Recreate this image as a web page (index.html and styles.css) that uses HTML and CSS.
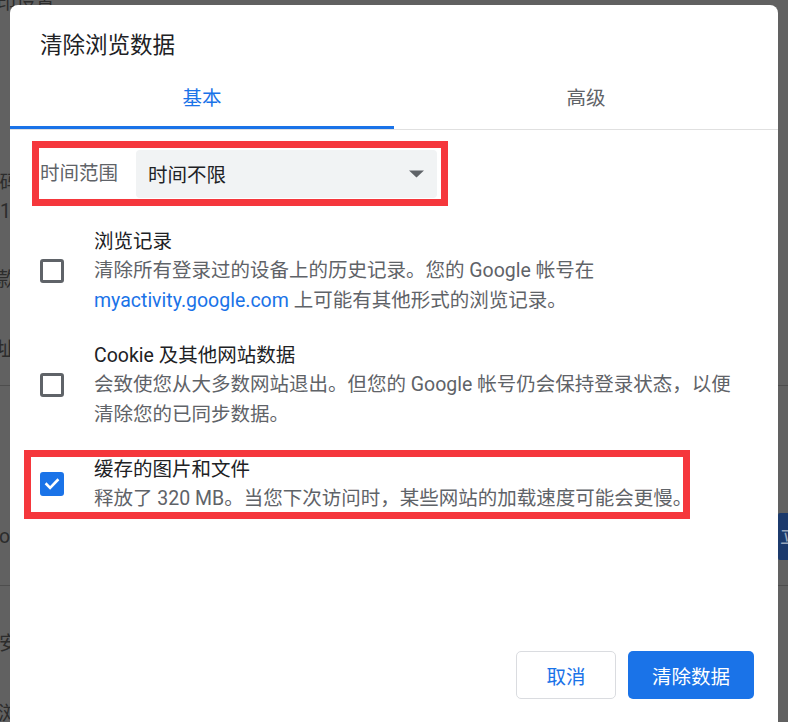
FILE: index.html
```html
<!DOCTYPE html>
<html lang="zh-CN">
<head>
<meta charset="utf-8">
<title>清除浏览数据</title>
<link rel="stylesheet" href="styles.css">
</head>
<body>
<div class="screen">
  <div class="backdrop">
    <div class="bg-row bg-row-1">
      <div class="frag frag-print">打印设置</div>
      <div class="frag frag-pw">密码</div>
      <div class="frag frag-1">1</div>
      <div class="frag frag-pay">款</div>
      <div class="frag frag-addr">址</div>
    </div>
    <div class="bg-row bg-row-2">
      <div class="frag frag-o">o</div>
      <div class="bg-btn">立即检查</div>
    </div>
    <div class="bg-row bg-row-3">
      <div class="frag frag-safe">安全</div>
      <div class="frag frag-last">浏</div>
    </div>
  </div>

  <div class="dialog">
    <h1 class="title">清除浏览数据</h1>
    <div class="tabs">
      <div class="tab active">基本</div>
      <div class="tab">高级</div>
    </div>
    <div class="body">
      <div class="range">
        <span class="range-label">时间范围</span>
        <div class="select">
          <span>时间不限</span>
          <svg class="arrow" width="15" height="8" viewBox="0 0 15 8"><path d="M0 0.5h15L7.5 7.5z" fill="#5f6368"/></svg>
        </div>
      </div>

      <div class="item">
        <span class="checkbox"></span>
        <div class="item-text">
          <div class="item-title">浏览记录</div>
          <div class="item-desc">清除所有登录过的设备上的历史记录。您的 Google 帐号在<br><a class="link">myactivity.google.com</a> 上可能有其他形式的浏览记录。</div>
        </div>
      </div>

      <div class="item">
        <span class="checkbox"></span>
        <div class="item-text">
          <div class="item-title">Cookie 及其他网站数据</div>
          <div class="item-desc">会致使您从大多数网站退出。但您的 Google 帐号仍会保持登录状态，以便<br>清除您的已同步数据。</div>
        </div>
      </div>

      <div class="item item-marked">
        <span class="checkbox checked">
          <svg width="18" height="18" viewBox="0 0 18 18"><path d="M3.5 9.2l3.6 3.6 7.4-7.6" fill="none" stroke="#fff" stroke-width="2.6" stroke-linecap="square"/></svg>
        </span>
        <div class="item-text">
          <div class="item-title">缓存的图片和文件</div>
          <div class="item-desc">释放了 320 MB。当您下次访问时，某些网站的加载速度可能会更慢。</div>
        </div>
      </div>
    </div>
    <div class="footer">
      <button class="btn btn-cancel">取消</button>
      <button class="btn btn-primary">清除数据</button>
    </div>
  </div>
</div>
</body>
</html>
```

FILE: styles.css
```css
html, body {
  margin: 0;
  padding: 0;
}

body {
  width: 788px;
  height: 722px;
  overflow: hidden;
  font-family: Roboto, "Noto Sans CJK SC", sans-serif;
}

.screen {
  position: relative;
  width: 788px;
  height: 722px;
  overflow: hidden;
  background: #616161;
}

/* dimmed page behind the dialog */
.backdrop {
  display: flex;
  flex-direction: column;
  width: 788px;
}

.bg-row {
  box-sizing: border-box;
  border-bottom: 1px solid #4e4e4e;
  display: flex;
  flex-direction: column;
}

.bg-row-1 { height: 386px; }
.bg-row-2 {
  height: 200px;
  flex-direction: row;
  justify-content: space-between;
  padding-top: 127px;
  align-items: flex-start;
}
.bg-row-3 { height: 136px; border-bottom: none; }

.frag {
  font-size: 19.5px;
  line-height: 20px;
  color: #2c2c2c;
  white-space: nowrap;
}

.frag-print { margin: -7px 0 0 -23px; }
.frag-pw { margin: 160px 0 0 -20px; }
.frag-1 { margin: 9px 0 0 0; }
.frag-pay { margin: 48px 0 0 -3px; }
.frag-addr { margin: 50px 0 0 -4px; }
.frag-o { margin: 14px 0 0 -1px; }
.frag-safe { margin: 48px 0 0 -1px; }
.frag-last { margin: 50px 0 0 -2px; }

.bg-btn {
  width: 100px;
  height: 47px;
  margin-right: -90px;
  background: #1c3a6c;
  color: #9aa6bb;
  font-size: 19px;
  line-height: 47px;
  padding-left: 2px;
  box-sizing: border-box;
  white-space: nowrap;
  overflow: hidden;
  border-radius: 2px;
}

/* dialog */
.dialog {
  position: absolute;
  left: 10px;
  top: 5px;
  width: 768px;
  height: 740px;
  background: #fff;
  border-radius: 8px;
  display: flex;
  flex-direction: column;
  color: #202124;
}

.title {
  margin: 0;
  padding: 25px 0 0 30px;
  height: 30px;
  font-size: 22.5px;
  line-height: 30px;
  font-weight: 400;
  color: #202124;
}

.tabs {
  display: flex;
  border-bottom: 1px solid #e0e0e0;
}

.tab {
  flex: 1;
  text-align: center;
  font-size: 19.5px;
  line-height: 28px;
  padding: 25px 0 13px;
  border-bottom: 3px solid transparent;
  color: #5f6368;
}

.tab.active {
  color: #1a73e8;
  border-bottom-color: #1a73e8;
}

.body {
  padding: 18px 30px 0 30px;
  display: flex;
  flex-direction: column;
}

.range {
  box-sizing: border-box;
  width: 402px;
  height: 51px;
  margin: 0 0 27.75px -1px;
  padding-left: 1px;
  display: flex;
  align-items: center;
  outline: 7px solid #f5373c;
}

.range-label {
  font-size: 19.5px;
  line-height: 28px;
  color: #5f6368;
  white-space: nowrap;
}

.select {
  box-sizing: border-box;
  margin-left: 18px;
  width: 301px;
  height: 48px;
  background: #f1f3f4;
  border-radius: 4px;
  padding: 0 13px 0 12px;
  display: flex;
  align-items: center;
  justify-content: space-between;
  font-size: 19.5px;
  color: #202124;
}

.arrow {
  display: block;
  margin-top: 1px;
}

.item {
  display: flex;
  align-items: center;
  gap: 30px;
  margin-bottom: 25.5px;
  font-size: 19.5px;
  line-height: 29.5px;
}

.item-marked {
  box-sizing: border-box;
  width: 656px;
  margin-left: -11px;
  padding-left: 11px;
  outline: 7px solid #f5373c;
  outline-offset: -2px;
}

.checkbox {
  flex-shrink: 0;
  box-sizing: border-box;
  width: 24px;
  height: 24px;
  border: 3px solid #5f6368;
  border-radius: 3px;
  display: flex;
  align-items: center;
  justify-content: center;
}

.checkbox.checked {
  background: #1a73e8;
  border-color: #1a73e8;
}

.checkbox svg {
  display: block;
}

.item-title {
  color: #202124;
  white-space: nowrap;
}

.item-desc {
  color: #5f6368;
  white-space: nowrap;
}

.link {
  color: #1a73e8;
  text-decoration: none;
}

.footer {
  margin-top: auto;
  display: flex;
  justify-content: flex-end;
  gap: 12px;
  padding: 0 24px 46px 0;
}

.btn {
  box-sizing: border-box;
  height: 48px;
  padding: 0 24px;
  font-family: inherit;
  font-size: 19.5px;
  border-radius: 5px;
  cursor: pointer;
}

.btn-cancel {
  min-width: 100px;
  background: #fff;
  border: 1px solid #dadce0;
  color: #1a73e8;
}

.btn-primary {
  background: #1a73e8;
  border: none;
  color: #fff;
}
```
